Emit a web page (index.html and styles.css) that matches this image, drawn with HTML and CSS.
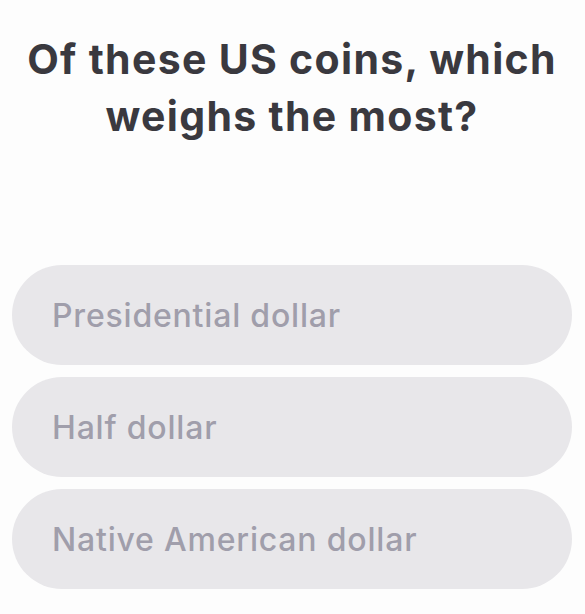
FILE: index.html
```html
<!DOCTYPE html>
<html>
<head>
<meta charset="utf-8">
<link rel="stylesheet" href="styles.css">
</head>
<body>
<main class="quiz">
  <h1 class="question">Of these US coins, which<br>weighs the most?</h1>
  <div class="options">
    <button class="option">Presidential dollar</button>
    <button class="option">Half dollar</button>
    <button class="option">Native American dollar</button>
  </div>
</main>
</body>
</html>
```
FILE: styles.css
```css
html, body {
  margin: 0;
  padding: 0;
  background: #fdfdfd;
}
.quiz {
  display: flex;
  flex-direction: column;
  padding: 0 13px 0 12px;
}
.question {
  margin: 0;
  padding-top: 31px;
  height: 235px;
  box-sizing: border-box;
  text-align: center;
  font-family: Inter, "Noto Sans", sans-serif;
  font-weight: 700;
  font-size: 41px;
  letter-spacing: 1.3px;
  line-height: 57px;
  color: #3a393f;
}
.options {
  display: flex;
  flex-direction: column;
  gap: 12px;
  padding-top: 30px;
}
.option {
  height: 100px;
  border: none;
  border-radius: 50px;
  background: #e8e7ea;
  text-align: left;
  padding: 0 0 0 40px;
  font-family: Inter, "Noto Sans", sans-serif;
  font-weight: 500;
  font-size: 32px;
  letter-spacing: 0.8px;
  color: #a09eab;
}
```
